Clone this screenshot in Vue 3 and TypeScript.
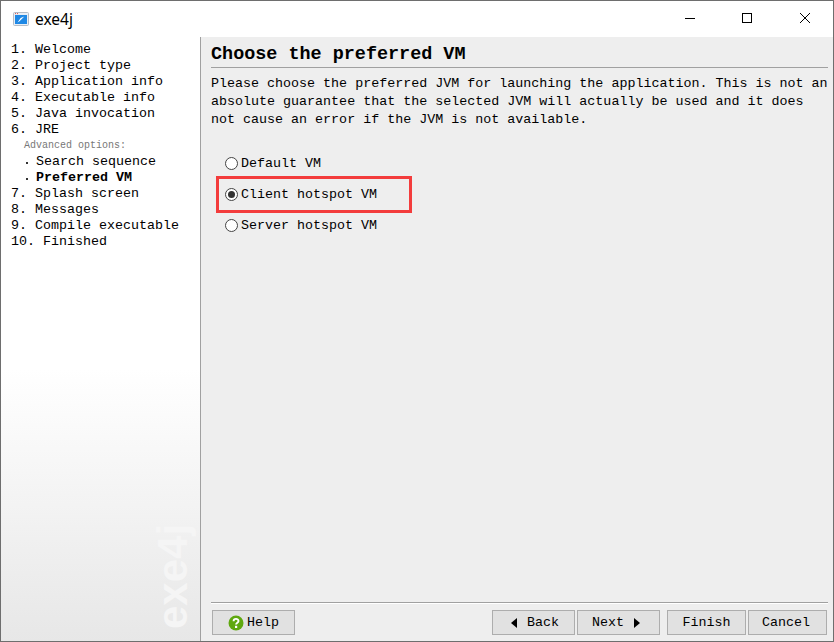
<script setup lang="ts">
interface Step { label: string; kind: 'main' | 'note' | 'sub' | 'current' }
const steps: Step[] = [
  { label: '1. Welcome', kind: 'main' },
  { label: '2. Project type', kind: 'main' },
  { label: '3. Application info', kind: 'main' },
  { label: '4. Executable info', kind: 'main' },
  { label: '5. Java invocation', kind: 'main' },
  { label: '6. JRE', kind: 'main' },
  { label: 'Advanced options:', kind: 'note' },
  { label: 'Search sequence', kind: 'sub' },
  { label: 'Preferred VM', kind: 'current' },
  { label: '7. Splash screen', kind: 'main' },
  { label: '8. Messages', kind: 'main' },
  { label: '9. Compile executable', kind: 'main' },
  { label: '10. Finished', kind: 'main' },
]
const options = [
  { label: 'Default VM', checked: false },
  { label: 'Client hotspot VM', checked: true },
  { label: 'Server hotspot VM', checked: false },
]
</script>

<template>
  <div class="window">
    <header class="titlebar">
      <svg class="app-icon" width="16" height="16" viewBox="0 0 16 16">
        <rect x="0.5" y="1.5" width="15" height="13" rx="1" fill="#e8eef5" stroke="#b5bcc6" />
        <rect x="2" y="4" width="12" height="9" fill="#1e88e5" />
        <path d="M4.5 11.5l2-1.2 4.8-4.8-3.6 1.6-1.6 2.2z" fill="#fff" />
        <path d="M2 2.6h4" stroke="#d9534f" stroke-dasharray="1 1" />
      </svg>
      <span class="app-title">exe4j</span>
      <div class="controls">
        <svg width="12" height="12" viewBox="0 0 12 12"><path d="M2 6.5h10" stroke="#000" /></svg>
        <svg width="12" height="12" viewBox="0 0 12 12"><rect x="1.5" y="1.5" width="9" height="9" fill="none" stroke="#000" /></svg>
        <svg width="12" height="12" viewBox="0 0 12 12"><path d="M1 1l10 10M11 1L1 11" stroke="#000" /></svg>
      </div>
    </header>
    <div class="body">
      <aside class="sidebar">
        <ul class="steps">
          <li v-for="s in steps" :key="s.label" :class="['step', s.kind]">{{ s.label }}</li>
        </ul>
        <div class="watermark">exe4j</div>
      </aside>
      <main class="content">
        <h1 class="heading">Choose the preferred VM</h1>
        <p class="desc">Please choose the preferred JVM for launching the application. This is not an absolute guarantee that the selected JVM will actually be used and it does not cause an error if the JVM is not available.</p>
        <div class="options">
          <label v-for="o in options" :key="o.label" class="option">
            <span :class="['radio', { on: o.checked }]"></span>
            <span>{{ o.label }}</span>
          </label>
          <div class="highlight"></div>
        </div>
        <footer class="footer">
          <button class="btn help">
            <svg width="16" height="16" viewBox="0 0 16 16">
              <circle cx="8" cy="8" r="7.5" fill="#5fa80f" />
              <path d="M5.6 6.2c0-3 4.9-3 4.9-.2 0 1.7-2.4 1.7-2.4 3.6" fill="none" stroke="#fff" stroke-width="1.9" />
              <rect x="7" y="10.8" width="2.2" height="2.2" fill="#fff" />
            </svg>
            Help
          </button>
          <div class="spacer"></div>
          <div class="nav">
            <button class="btn back"><span class="tri left"></span>Back</button>
            <button class="btn next">Next<span class="tri right"></span></button>
          </div>
          <div class="nav end">
            <button class="btn finish">Finish</button>
            <button class="btn cancel">Cancel</button>
          </div>
        </footer>
      </main>
    </div>
  </div>
</template>

<style>
html, body { margin: 0; padding: 0; background: #fff; }
</style>

<style scoped>
.window {
  width: 834px;
  height: 642px;
  box-sizing: border-box;
  border: 1px solid #6e6e6e;
  display: flex;
  flex-direction: column;
  font-family: "Liberation Mono", monospace;
  font-size: 13.33px;
  color: #000;
  background: #fff;
  overflow: hidden;
}
.titlebar {
  height: 36px;
  flex: none;
  display: flex;
  align-items: center;
  padding-left: 12px;
  background: #fff;
}
.app-title {
  font-family: "Noto Sans", "Liberation Sans", sans-serif;
  font-size: 15.5px;
  margin-left: 6px;
}
.controls {
  margin-left: auto;
  display: flex;
  gap: 46px;
  padding: 0 22px 2px 0;
  align-items: center;
}
.body {
  flex: 1;
  display: flex;
  min-height: 0;
}
.sidebar {
  position: relative;
  width: 200px;
  flex: none;
  box-sizing: border-box;
  border-right: 1px solid #a0a0a0;
  background: linear-gradient(#fff 0, #fff 55%, #e7e7e7 100%);
  overflow: hidden;
}
.steps {
  list-style: none;
  margin: 0;
  padding: 5px 0 0 10px;
}
.step {
  height: 16px;
  line-height: 16px;
  white-space: pre;
}
.note {
  font-size: 10px;
  color: #777;
  padding-left: 13px;
}
.sub, .current {
  padding-left: 25px;
  position: relative;
}
.sub::before, .current::before {
  content: "";
  position: absolute;
  left: 15px;
  top: 8px;
  width: 2px;
  height: 2px;
  background: #333;
}
.current { font-weight: bold; }
.watermark {
  position: absolute;
  left: 155px;
  top: 592px;
  transform-origin: 0 0;
  transform: rotate(-90deg);
  font-family: "Liberation Sans", sans-serif;
  font-weight: bold;
  font-size: 42px;
  line-height: 34px;
  color: #f5f5f5;
  white-space: nowrap;
}
.content {
  flex: 1;
  min-width: 0;
  background: #eeeeee;
  padding: 0 5px 6px 10px;
  display: flex;
  flex-direction: column;
}
.heading {
  margin: 0;
  height: 30px;
  line-height: 36px;
  font-size: 18.45px;
  font-weight: bold;
  border-bottom: 1px solid #a0a0a0;
  white-space: nowrap;
}
.desc {
  margin: 7px 0 0;
  line-height: 18px;
  font-size: 13.35px;
}
.options {
  position: relative;
  margin-top: 26px;
  padding-left: 14px;
  flex: 1;
  display: flex;
  flex-direction: column;
  gap: 15px;
}
.option {
  display: flex;
  align-items: center;
  height: 16px;
  gap: 3px;
}
.radio {
  width: 13px;
  height: 13px;
  box-sizing: border-box;
  border: 1px solid #444;
  border-radius: 50%;
  background: #fff;
  position: relative;
}
.radio.on::after {
  content: "";
  position: absolute;
  inset: 2px;
  border-radius: 50%;
  background: #333;
}
.highlight {
  position: absolute;
  left: 5px;
  top: 21px;
  width: 196px;
  height: 37px;
  box-sizing: border-box;
  border: 3px solid #f33c3c;
}
.footer {
  flex: none;
  display: flex;
  align-items: center;
  border-top: 1px solid #a0a0a0;
  box-shadow: inset 0 1px 0 #fff;
  padding-top: 7px;
}
.spacer { flex: 1; }
.nav { display: flex; gap: 2px; }
.nav.end { margin: 0 1px 0 7px; gap: 2px; }
.btn {
  height: 25px;
  box-sizing: border-box;
  border: 1px solid #adadad;
  background: #e1e1e1;
  font: inherit;
  color: #000;
  padding: 0;
  display: flex;
  align-items: center;
  justify-content: center;
}
.help { width: 83px; gap: 3px; margin-left: 1px; }
.back, .next { width: 83px; gap: 10px; }
.back { padding-left: 3px; }
.next { padding-right: 5px; }
.finish { width: 79px; }
.cancel { width: 79px; padding-right: 3px; }
.tri {
  width: 0;
  height: 0;
  border-top: 5px solid transparent;
  border-bottom: 5px solid transparent;
}
.tri.left { border-right: 6px solid #000; }
.tri.right { border-left: 6px solid #000; }
</style>
